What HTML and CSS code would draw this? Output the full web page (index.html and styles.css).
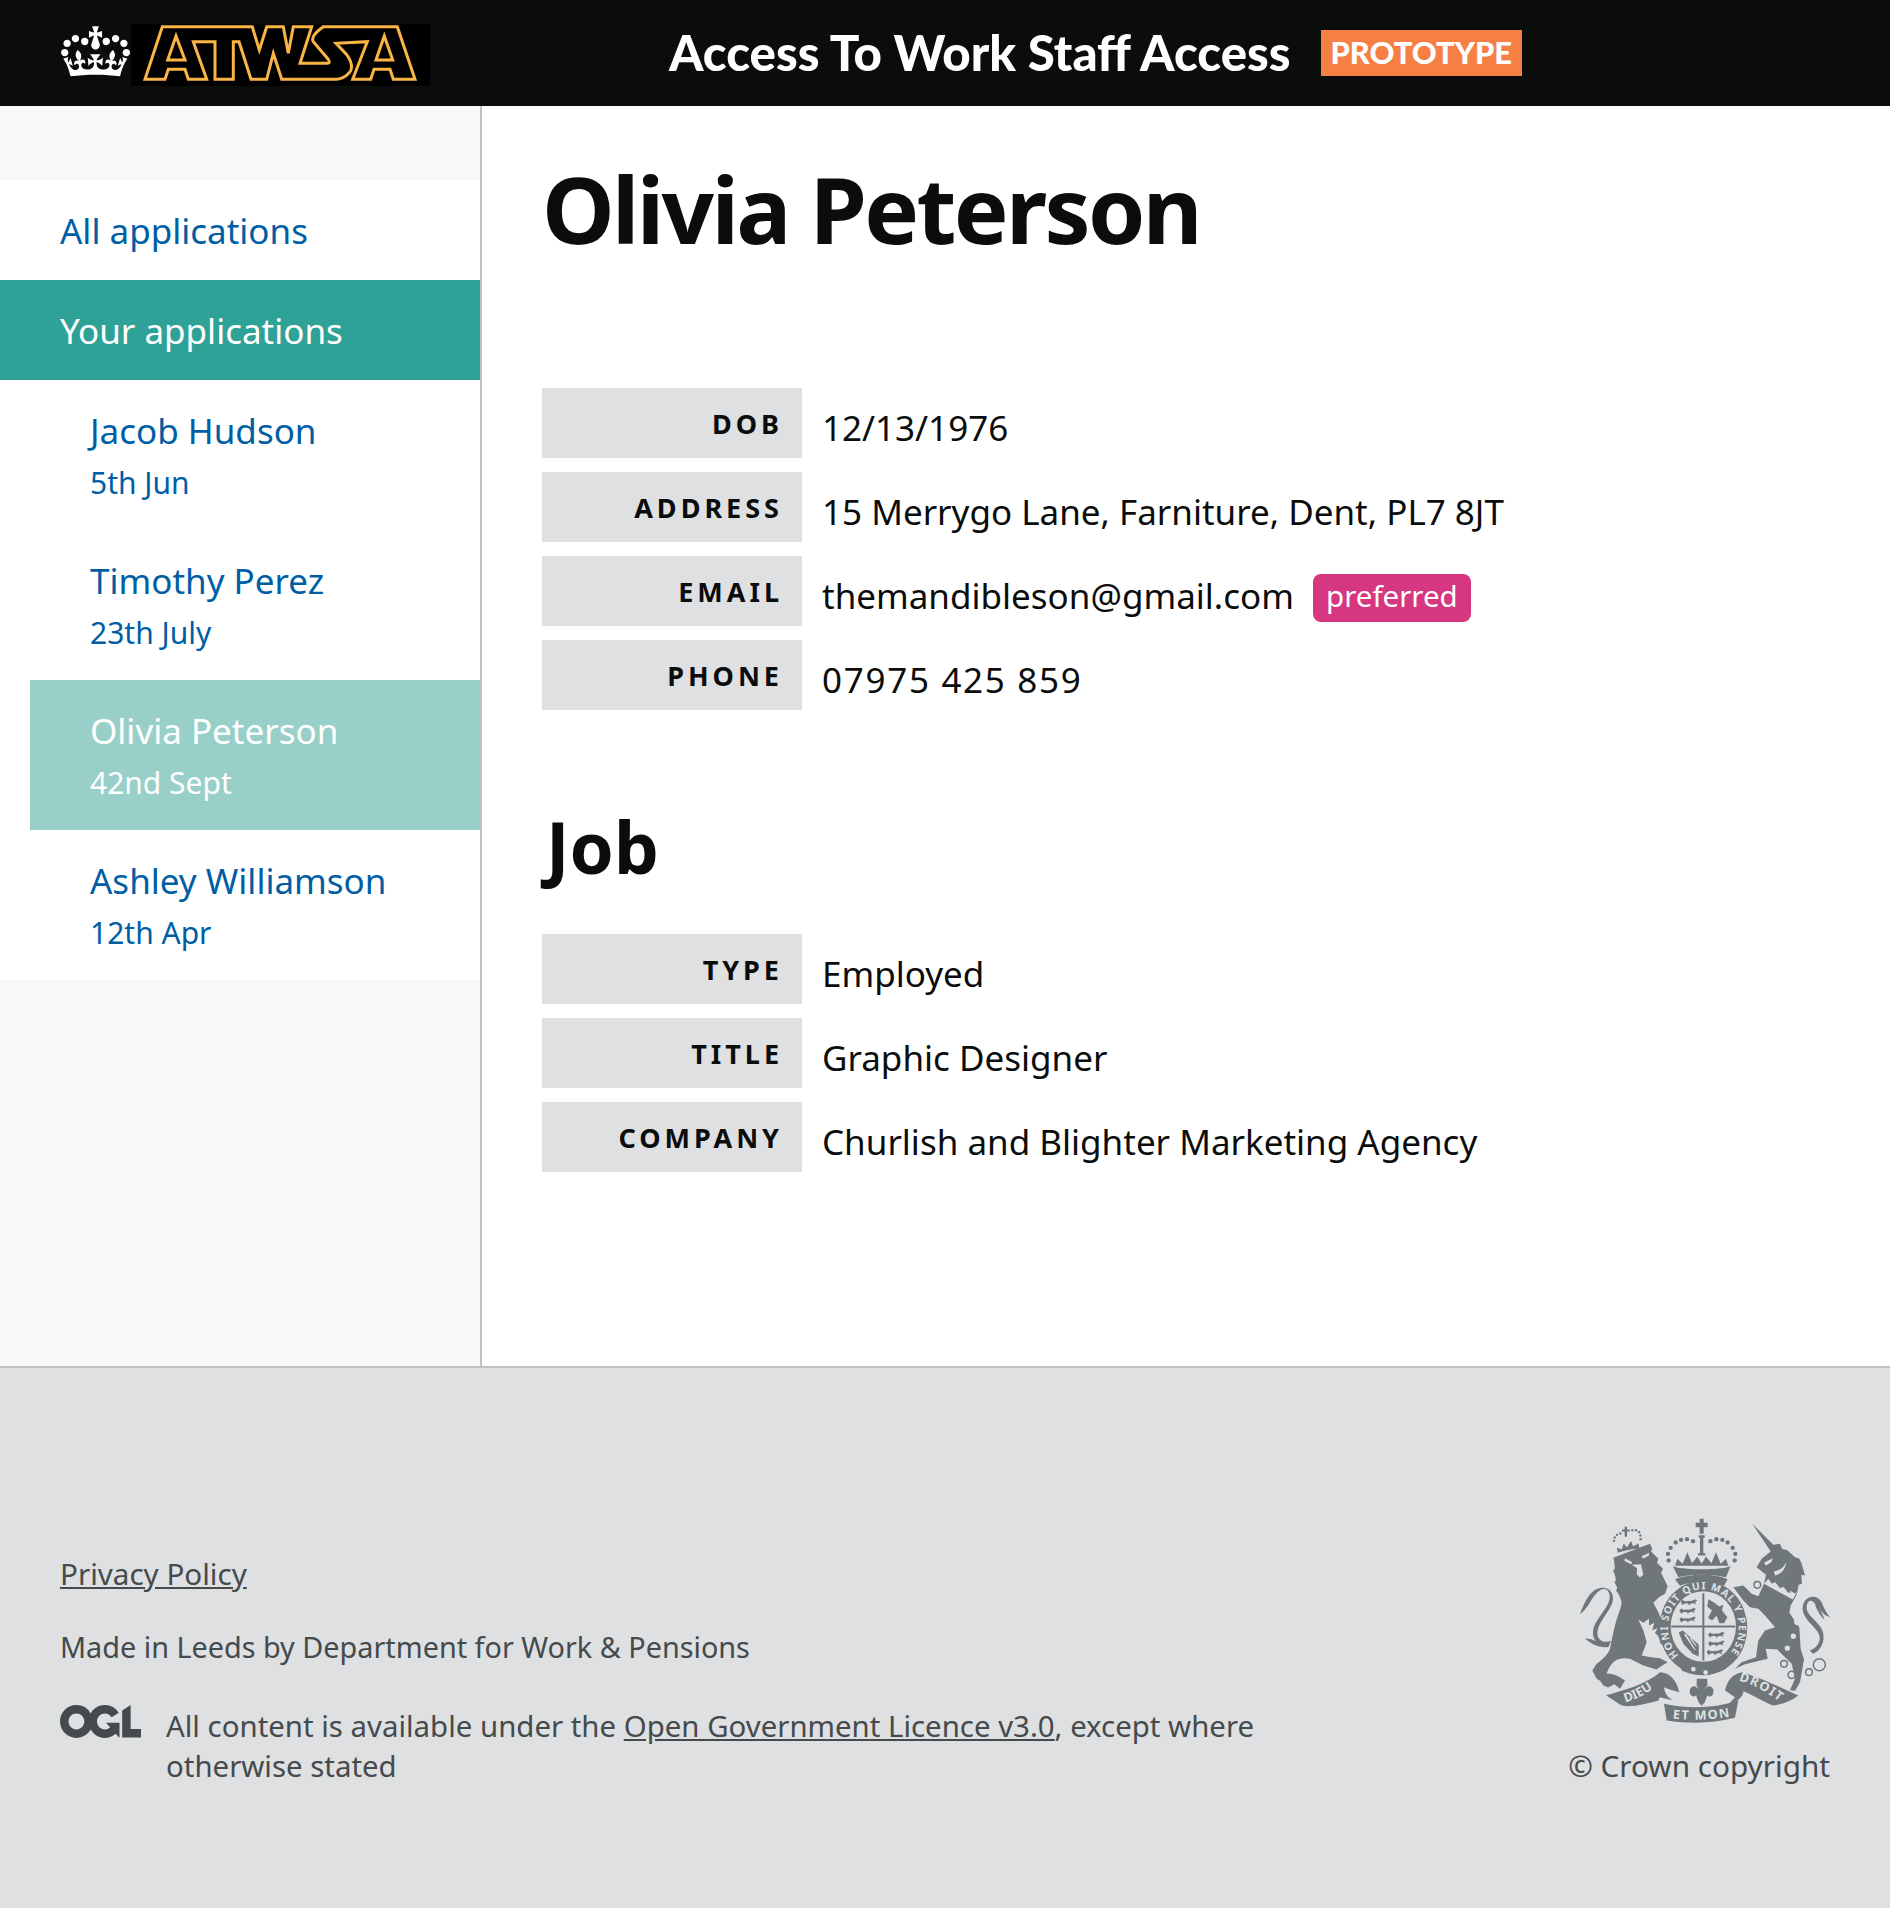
FILE: index.html
```html
<!DOCTYPE html>
<html lang="en">
<head>
  <meta charset="UTF-8" />
  <title>Access To Work Staff Access</title>
  <link rel="stylesheet" href="styles.css">
</head>
<body>

<header class="cabecera">
  <svg class="corona" viewBox="0 0 132 97" aria-hidden="true"><path fill="#fff" fill-rule="evenodd" d="M25 30.2c3.5 1.5 7.7-.2 9.1-3.7 1.5-3.6-.2-7.8-3.9-9.2-3.6-1.4-7.6.3-9.1 3.9-1.4 3.5.3 7.5 3.9 9zM9 39.5c3.6 1.5 7.8-.2 9.2-3.7 1.5-3.6-.2-7.8-3.9-9.1-3.6-1.5-7.6.2-9.1 3.8-1.4 3.5.3 7.5 3.8 9zM4.4 57.2c3.5 1.5 7.7-.2 9.1-3.8 1.5-3.6-.2-7.7-3.9-9.1-3.5-1.5-7.6.3-9.1 3.8-1.4 3.5.3 7.6 3.9 9.1zm38.3-21.4c3.5 1.5 7.7-.2 9.1-3.8 1.5-3.6-.2-7.7-3.9-9.1-3.6-1.5-7.6.3-9.1 3.8-1.3 3.6.4 7.7 3.9 9.1zm64.4-5.6c-3.6 1.5-7.8-.2-9.1-3.7-1.5-3.6.2-7.8 3.8-9.2 3.6-1.4 7.7.3 9.2 3.9 1.3 3.5-.4 7.5-3.9 9zm15.9 9.3c-3.6 1.5-7.7-.2-9.1-3.7-1.5-3.6.2-7.8 3.7-9.1 3.6-1.5 7.7.2 9.2 3.8 1.5 3.5-.3 7.5-3.8 9zm4.7 17.7c-3.6 1.5-7.8-.2-9.2-3.8-1.5-3.6.2-7.7 3.9-9.1 3.6-1.5 7.7.3 9.2 3.8 1.3 3.5-.4 7.6-3.9 9.1zM89.3 35.8c-3.6 1.5-7.8-.2-9.2-3.8-1.4-3.6.2-7.7 3.9-9.1 3.6-1.5 7.7.3 9.2 3.8 1.4 3.6-.3 7.7-3.9 9.1zM69.7 17.7l8.9 4.7V9.3l-8.9 2.8c-.2-.3-.5-.6-.9-.9L72.4 0H59.6l3.6 11.2c-.3.3-.6.5-.9.9l-8.8-2.8v13.1l8.8-4.7c.3.3.6.7.9.9l-5 15.4v.1c-.2.8-.4 1.6-.4 2.4 0 4.1 3.1 7.5 7 8.1h.2c.3 0 .7.1 1 .1.4 0 .7 0 1-.1h.2c4-.6 7.1-4.1 7.1-8.1 0-.8-.1-1.7-.4-2.4V34l-5.1-15.4c.4-.2.7-.6 1-.9zM66 92.8c16.9 0 32.8 1.1 47.1 3.2 4-16.9 8.9-26.7 14-33.5l-9.6-3.4c1 4.9 1.1 7.2 0 10.2-1.5-1.4-3-4.3-4.2-8.7L108.6 76c2.8-2 5-3.2 7.5-3.3-4.4 9.4-10 11.9-13.6 11.2-4.3-.8-6.3-4.6-5.6-7.9 1-4.7 5.7-5.9 8-.5 4.3-8.7-3-11.4-7.6-8.8 7.1-7.2 7.9-13.5 2.1-21.1-8 6.1-8.1 12.3-4.5 20.8-4.7-5.4-12.1-2.5-9.5 6.2 3.4-5.2 7.9-2 7.2 3.1-.6 4.3-6.4 7.8-13.5 7.2-10.3-.9-10.9-8-11.2-13.8 2.5-.5 7.1 1.8 11 7.3L80.2 60c-4.1 4.4-8 5.3-12.3 5.4 1.4-4.4 8-11.6 8-11.6H55.5s6.4 7.2 7.9 11.6c-4.2-.1-8-1-12.3-5.4l1.4 16.4c3.9-5.5 8.5-7.7 10.9-7.3-.3 5.8-.9 12.8-11.1 13.8-7.2.6-12.9-2.9-13.5-7.2-.7-5 3.8-8.3 7.1-3.1 2.7-8.7-4.6-11.6-9.4-6.2 3.7-8.5 3.6-14.7-4.6-20.8-5.8 7.6-5 13.9 2.2 21.1-4.7-2.6-11.9.1-7.7 8.8 2.3-5.5 7.1-4.2 8.1.5.7 3.3-1.3 7.1-5.7 7.9-3.5.7-9-1.8-13.5-11.2 2.5.1 4.7 1.3 7.5 3.3l-4.7-15.4c-1.2 4.4-2.7 7.2-4.3 8.7-1.1-3-.9-5.3 0-10.2l-9.5 3.4c5 6.9 9.9 16.7 14 33.5 14.8-2.1 30.8-3.2 47.7-3.2z"/></svg>
  <svg class="logo" viewBox="0 0 299 62" role="img" aria-label="ATWSA"><g fill="none" stroke="#fbb545" stroke-width="3" stroke-linejoin="miter"><path d="M14 55.3 31.3 2.7H121.3L128.3 26 135.7 2.7H152.3L157.3 29.3 162.3 2.7H180.7L169 39.3H196Q200 39.3 197 35L182.3 17.7Q179 12 192.3 2.7H266.3L284 55.3H262.3L259 45.3H243L239.7 55.3H221.7L236.3 17.7 205 19.3 216 31Q224 43 218 49 212 55.3 205 55.3H150.7L142.3 29.3 135.7 55.3H120L108 17.7H102.3V55.3H84V17.7H62.3L75.7 55.3H57.3L54 45.3H37.3L34 55.3Z"/><path d="M45 12 36.7 36H54Z"/><path d="M253.3 12 245 36H261.7Z"/></g></svg>
  <span class="titulo">Access To Work Staff Access</span>
  <span class="prototipo">PROTOTYPE</span>
</header>

<div class="contenido">
  <aside class="lateral">
    <nav class="menu">
      <a class="menu-item" href="#">All applications</a>
      <a class="menu-item activo" href="#">Your applications</a>
      <a class="persona" href="#"><span class="nombre">Jacob Hudson</span><span class="fecha">5th Jun</span></a>
      <a class="persona" href="#"><span class="nombre">Timothy Perez</span><span class="fecha">23th July</span></a>
      <a class="persona elegida" href="#"><span class="nombre">Olivia Peterson</span><span class="fecha">42nd Sept</span></a>
      <a class="persona" href="#"><span class="nombre">Ashley Williamson</span><span class="fecha">12th Apr</span></a>
    </nav>
  </aside>

  <main class="ficha">
    <h1>Olivia Peterson</h1>

    <dl class="datos">
      <div class="fila"><dt>DOB</dt><dd>12/13/1976</dd></div>
      <div class="fila"><dt>ADDRESS</dt><dd>15 Merrygo Lane, Farniture, Dent, PL7 8JT</dd></div>
      <div class="fila"><dt>EMAIL</dt><dd>themandibleson@gmail.com <span class="preferido">preferred</span></dd></div>
      <div class="fila"><dt>PHONE</dt><dd class="telefono">07975 425 859</dd></div>
    </dl>

    <h2>Job</h2>

    <dl class="datos">
      <div class="fila"><dt>TYPE</dt><dd>Employed</dd></div>
      <div class="fila"><dt>TITLE</dt><dd>Graphic Designer</dd></div>
      <div class="fila"><dt>COMPANY</dt><dd>Churlish and Blighter Marketing Agency</dd></div>
    </dl>
  </main>
</div>

<footer class="pie">
  <div class="pie-izq">
    <a class="pie-link privacidad" href="#">Privacy Policy</a>
    <p class="hecho">Made in Leeds by Department for Work &amp; Pensions</p>
    <div class="licencia">
      <svg class="ogl" viewBox="0 0 483.2 195.7" aria-hidden="true"><path fill="#454a4c" d="M421.5 142.8V.1l-50.7 32.3v161.1h112.4v-50.7zm-122.3-9.6A47.12 47.12 0 0 1 221 97.8c0-26 21.1-47.1 47.1-47.1 16.7 0 31.4 8.7 39.7 21.8l42.7-27.2A97.63 97.63 0 0 0 268.1 0c-36.5 0-68.3 20.1-85.1 49.7A98 98 0 0 0 97.8 0C43.9 0 0 43.9 0 97.8s43.9 97.8 97.8 97.8c36.5 0 68.3-20.1 85.1-49.7a97.76 97.76 0 0 0 149.6 25.4l19.4 22.2h3v-87.8h-80l24.3 27.5zM97.8 145c-26 0-47.1-21.1-47.1-47.1s21.1-47.1 47.1-47.1 47.2 21 47.2 47S123.8 145 97.8 145"/></svg>
      <p>All content is available under the <a class="pie-link" href="#">Open Government Licence v3.0</a>, except where otherwise stated</p>
    </div>
  </div>
  <div class="pie-der">
    <svg class="escudo" viewBox="60 50 750 620" aria-hidden="true">
      <defs>
        <path id="arco-liga" d="M356 465A106 116 0 1 1 504 465"/>
        <path id="arco-dieu" d="M196 606Q255 588 298 548"/>
        <path id="arco-mon" d="M338 654Q420 664 514 648"/>
        <path id="arco-droit" d="M536 540Q600 558 662 606"/>
        <path id="leoncito" d="M0 8 6 2 12 6 34 5 44 0 50 4 44 8 46 16 40 12 30 13 26 18 20 12 10 14 6 18Z"/>
      </defs>
      <g fill="#6f777b">
        <!-- leon -->
        <g transform="translate(45 45)">
          <path d="M115 127 150 113 225 85 232 100 228 108 250 130 246 142 264 160 258 172 278 212 270 235 252 245 235 262 250 290 262 320 280 345 292 368 270 392 257 385 250 362 240 352 248 338 232 344 238 322 222 330 222 310 205 322 190 312 205 345 215 380 200 420 228 425 255 428 278 440 258 452 245 462 205 450 165 430C145 426 125 430 115 440 105 450 98 462 95 475 110 474 125 478 150 495L135 520 118 506 100 516 85 510 75 496 65 490 52 465 65 445C85 430 100 415 105 400 110 375 115 350 120 330 126 305 138 280 140 260 134 240 130 232 122 224 128 222 128 214 118 200 126 200 122 180 114 165 122 165 120 150 115 127Z"/>
          <path d="M100 395C70 398 50 385 30 370 45 368 55 372 62 378 44 350 58 325 80 295 105 262 112 240 95 222 78 214 60 235 48 255 40 270 30 285 15 296 25 270 38 235 62 222 92 208 120 225 113 258 105 290 62 325 68 362 75 378 90 382 108 376Z"/>
          <g>
            <path d="M128 112 126 96 140 102 146 84 156 96 168 76 174 92 190 84 194 100C170 100 148 106 128 112Z"/>
            <path d="M149 34H156V42H164V48H156V64H149V48H141V42H149Z"/>
            <circle cx="117" cy="76" r="3.6"/><circle cx="119" cy="66" r="3.6"/><circle cx="126" cy="58" r="3.6"/><circle cx="136" cy="54" r="3.6"/>
            <circle cx="172" cy="44" r="3.6"/><circle cx="183" cy="44" r="3.6"/><circle cx="192" cy="50" r="3.6"/><circle cx="196" cy="60" r="3.6"/><circle cx="197" cy="71" r="3.6"/>
          </g>
          <g fill="#dee0e2">
            <path d="M150 128 172 140 168 146 148 136Z"/><path d="M200 122 222 112 222 120 204 130Z"/>
            <path d="M170 148 198 146 205 178 195 186 185 176 186 158Z"/>
          </g>
        </g>
        <!-- unicornio -->
        <g transform="translate(420 45)">
          <path d="M157 25 220 88 240 85 246 100 262 104 285 125 298 130 305 145 315 180 304 178 306 205 296 208 290 238 272 270 268 292 298 335 302 400 312 432 300 500 285 526 270 524 285 490 275 445 232 402 197 400 203 430 135 446 105 460 125 440 168 425 175 375 195 345 225 335 195 300 175 280 150 275 130 255 100 215 130 210 155 235 175 242 192 205 198 178 170 155 185 130 212 108Z"/>
          <path d="M330 405C355 395 370 370 350 345 330 320 300 300 310 265 320 240 350 235 365 260 372 278 380 295 390 305 375 302 365 290 358 280 370 300 372 308 372 312 360 300 348 280 345 265 335 250 322 255 320 272 316 295 345 310 362 335 382 368 365 405 338 415Z"/>
          <g fill="none" stroke="#6f777b" stroke-width="4.5">
            <circle cx="252" cy="445" r="10"/><circle cx="275" cy="478" r="11"/><circle cx="327" cy="470" r="10"/><circle cx="358" cy="448" r="18"/>
            <circle cx="172" cy="208" r="10"/>
          </g>
          <g fill="#dee0e2">
            <circle cx="293" cy="318" r="11"/><circle cx="280" cy="362" r="8"/><circle cx="262" cy="398" r="8"/><circle cx="162" cy="290" r="9"/>
            <path d="M192 205 278 252 292 228 285 234 270 225 262 228 250 214 240 218 226 200 215 204 205 190Z"/>
            <path d="M192 142 218 128 214 140 198 150Z"/>
            <path d="M222 168C240 165 252 155 258 140 258 158 245 175 225 180Z"/>
          </g>
          <path d="M260 230 268 220 272 232Z M238 212 246 202 250 216Z M216 198 222 190 228 200Z"/>
        </g>
        <!-- corona -->
        <path d="M338 196C350 210 500 210 512 196L498 230C460 220 390 220 355 230Z"/>
        <path d="M345 236C390 218 465 218 503 236L492 256C450 240 400 240 360 256Z"/>
        <path d="M345 196 352 175 368 190 382 155 396 188 412 168 425 190 438 168 454 188 468 155 482 190 498 175 505 196Z"/>
        <path d="M419 55H431V67H443V80H431V100H419V80H407V67H419Z"/>
        <path d="M416 104H434V112H430V158H436V165H414V158H420V112H416Z"/>
        <g>
          <circle cx="326" cy="180" r="6.5"/><circle cx="324" cy="160" r="6.5"/><circle cx="332" cy="142" r="6.5"/><circle cx="347" cy="126" r="6.5"/><circle cx="363" cy="118" r="6.5"/><circle cx="381" cy="116" r="6.5"/><circle cx="399" cy="122" r="6.5"/>
          <circle cx="524" cy="180" r="6.5"/><circle cx="526" cy="160" r="6.5"/><circle cx="518" cy="142" r="6.5"/><circle cx="503" cy="126" r="6.5"/><circle cx="487" cy="118" r="6.5"/><circle cx="469" cy="116" r="6.5"/><circle cx="451" cy="122" r="6.5"/>
        </g>
        <!-- escudo central -->
        <ellipse cx="430" cy="382" rx="132" ry="142"/>
        <ellipse cx="430" cy="378" rx="98" ry="106" fill="#dee0e2"/>
        <path d="M427 278H433V480H427Z M334 375H526V381H334Z"/>
        <use href="#leoncito" x="362" y="296"/>
        <use href="#leoncito" x="358" y="322"/>
        <use href="#leoncito" x="358" y="348"/>
        <path d="M445 296 462 306 478 318 490 312 486 330 502 350 492 368H478L470 346 456 360 444 352 456 330 442 318Z"/>
        <use href="#leoncito" x="444" y="394"/>
        <use href="#leoncito" x="444" y="420"/>
        <use href="#leoncito" x="440" y="446"/>
        <path d="M356 396 368 390 416 432 416 468 398 460 370 430Z"/>
        <path d="M372 402 378 400 408 450 403 448ZM388 412 393 412 410 436 408 438Z" fill="#dee0e2"/>
        <path d="M355 478Q430 524 510 472L498 505Q430 540 365 510Z"/>
        <circle cx="400" cy="506" r="7" fill="#dee0e2"/><circle cx="437" cy="516" r="7" fill="#dee0e2"/>
        <!-- cinta -->
        <path d="M138 584C190 570 260 550 300 515 330 515 350 540 358 575 340 570 322 565 312 560 315 580 322 590 340 600L300 590 295 600C260 610 200 625 180 612Z"/>
        <path d="M312 610C380 625 460 625 535 600L525 652C450 670 390 670 320 660Z"/>
        <path d="M495 570C500 545 515 520 545 515 600 530 670 565 715 585 690 605 660 612 640 615 600 600 575 580 550 572 550 590 530 605 505 612L525 590Z"/>
        <!-- flor de lis -->
        <path d="M410 535H442V556L432 566 440 560C450 552 464 562 460 578 456 590 446 590 442 584L434 606 425 616 416 606 408 584C404 590 394 590 390 578 386 562 400 552 410 560L418 566 410 556Z"/>
      </g>
      <g class="escudo-letra">
        <text font-size="31"><textPath href="#arco-liga" textLength="518" lengthAdjust="spacing">HONI SOIT QUI MAL Y PENSE</textPath></text>
        <text font-size="38"><textPath href="#arco-dieu">DIEU</textPath></text>
        <text font-size="38"><textPath href="#arco-mon" textLength="172">ET MON</textPath></text>
        <text font-size="38"><textPath href="#arco-droit" textLength="138">DROIT</textPath></text>
      </g>
    </svg>
    <span class="copyright">© Crown copyright</span>
  </div>
</footer>

</body>
</html>
```

FILE: styles.css
```css
* { box-sizing: border-box; }
body { margin: 0; font-family: "Noto Sans", Arial, sans-serif; color: #0b0c0c; background: #fff; }
a { text-decoration: none; }

.cabecera {
  display: flex;
  align-items: center;
  height: 106px;
  padding-left: 61px;
  background: #0b0c0c;
}
.corona { width: 69px; height: 51px; margin-bottom: 4px; }
.logo { width: 299px; height: 62px; margin: 4px 0 0 1px; background: #000; }
.titulo {
  margin: 0 0 4px 239px;
  font-family: Lato, Arial, sans-serif;
  font-size: 49.2px;
  font-weight: 900;
  color: #fff;
}
.prototipo {
  margin-left: 30px;
  padding: 0 10px;
  height: 46px;
  line-height: 46px;
  background: #f67f44;
  color: #fff;
  font-family: Lato, Arial, sans-serif;
  font-size: 30.8px;
  font-weight: 900;
}

.contenido { display: flex; height: 1260px; }
.lateral {
  width: 482px;
  flex: none;
  padding-top: 74px;
  background: #f8f8f8;
  border-right: 2px solid #bfc1c3;
}
.menu { display: flex; flex-direction: column; background: #fff; }
.menu-item {
  height: 100px;
  padding: 2px 60px 0;
  line-height: 98px;
  font-size: 35px;
  color: #005ea5;
}
.menu-item.activo { background: #2fa297; color: #fff; }
.persona {
  display: flex;
  flex-direction: column;
  height: 150px;
  padding: 26px 0 0 90px;
  color: #005ea5;
}
.persona.elegida { margin-left: 30px; padding-left: 60px; background: #98d0c9; color: #fff; }
.nombre { font-size: 35px; line-height: 50px; }
.fecha { font-size: 30px; line-height: 54px; }

.ficha { flex: 1; padding: 49px 60px 0; }
h1 { margin: 0 0 125px; font-size: 92px; line-height: 108px; font-weight: 700; letter-spacing: -2.7px; }
h2 { margin: 95px 0 45px 4px; font-size: 71px; line-height: 84px; font-weight: 700; }
.datos { margin: 0; display: flex; flex-direction: column; gap: 14px; }
.fila { display: flex; align-items: center; height: 70px; }
dt {
  width: 260px;
  height: 70px;
  padding-right: 19px;
  text-align: right;
  line-height: 72px;
  background: #dee0e2;
  font-size: 27px;
  font-weight: 700;
  letter-spacing: 4px;
}
dd {
  display: flex;
  align-items: center;
  margin: 0 0 0 20px;
  font-size: 35px;
  padding-top: 9px;
  white-space: pre;
}
.telefono { letter-spacing: 1.7px; }
.preferido {
  margin: 4px 0 0 10px;
  padding: 0 13px;
  height: 48px;
  line-height: 44px;
  border-radius: 8px;
  background: #d53880;
  color: #fff;
  font-size: 29.5px;
}

.pie {
  display: flex;
  justify-content: space-between;
  align-items: flex-end;
  height: 542px;
  padding: 0 60px 122px;
  background: #dee0e2;
  border-top: 2px solid #bfc1c3;
  color: #454a4c;
  font-size: 29.4px;
}
.pie-link { color: #454a4c; text-decoration: underline; }
.privacidad { display: block; line-height: 42px; font-size: 29.6px; }
.hecho { margin: 31px 0 38px; line-height: 42px; font-size: 28.8px; }
.licencia { display: flex; width: 1200px; }
.ogl { width: 81px; height: 33px; flex: none; margin: -1px 25px 0 0; }
.licencia p { margin: 0; line-height: 40px; }
.pie-der { display: flex; flex-direction: column; align-items: flex-end; }
.escudo { width: 250px; height: 207px; margin-bottom: 22px; }
.copyright { line-height: 40px; font-size: 29.7px; }
.escudo-letra { fill: #dee0e2; font-family: "Noto Sans", sans-serif; font-weight: 700; }
```
